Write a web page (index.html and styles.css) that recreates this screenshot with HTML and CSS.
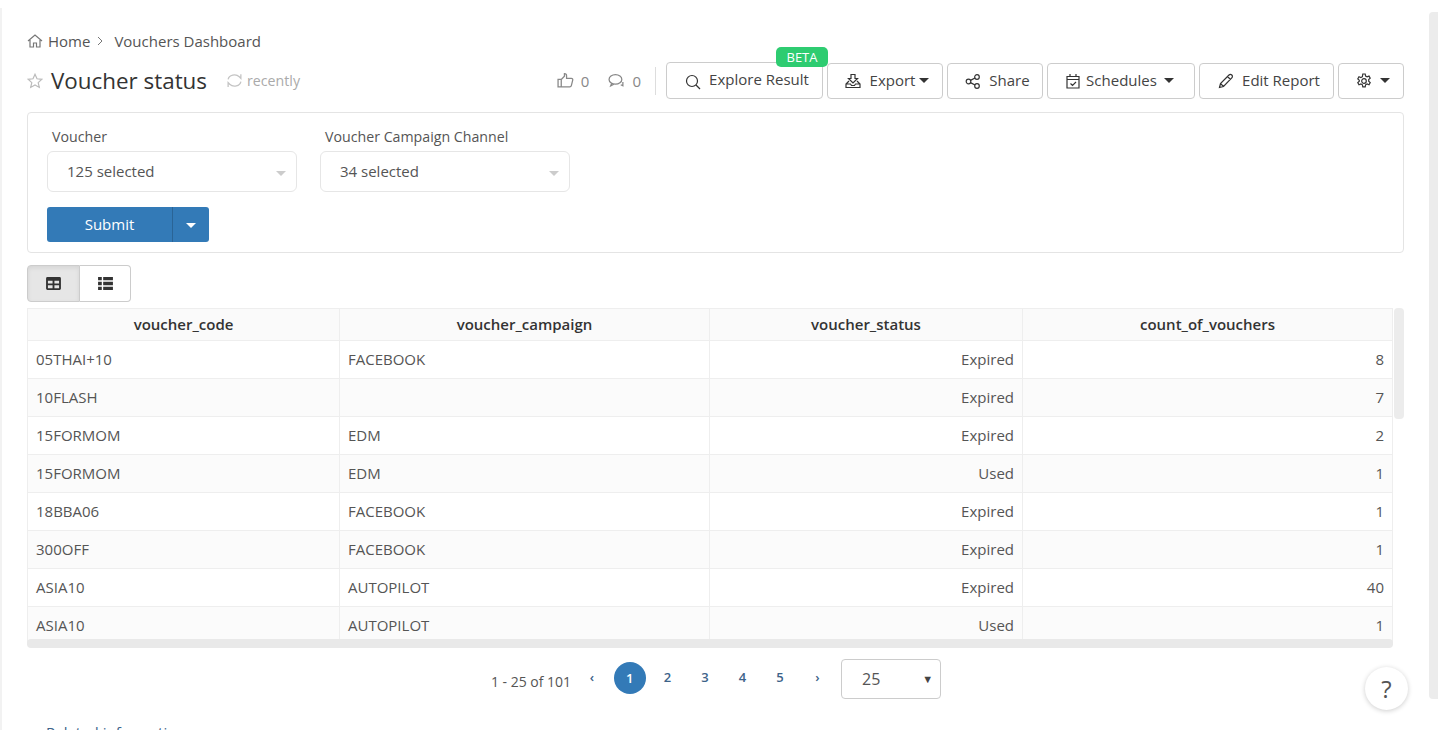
FILE: index.html
```html
<!DOCTYPE html>
<html lang="en">
  <head>
    <meta charset="UTF-8" />
    <title>Voucher status</title>
    <link rel="stylesheet" href="styles.css">
  </head>
  <body>
    <div class="page-rail"></div>
    <div class="page-scroll"></div>
    <div class="container">
      <div class="breadcrumb">
        <svg class="icon home-icon" viewBox="0 0 16 16"><path d="M1 8 8 2l7 6M3 7v7h3.500v-4h3v4H13V7"/></svg>
        <span>Home</span>
        <svg class="crumb-sep" viewBox="0 0 6 10"><path d="M1 1l4 4-4 4"/></svg>
        <span>Vouchers Dashboard</span>
      </div>

      <div class="header">
        <div class="title-group">
          <svg class="icon star-icon" viewBox="0 0 16 16"><path d="M8 1.300l2 4.500 4.900.5-3.700 3.300 1.100 4.800L8 12l-4.300 2.400 1.100-4.800L1.100 6.300 6 5.800z"/></svg>
          <h1>Voucher status</h1>
          <svg class="icon sync-icon" viewBox="0 0 16 16"><path d="M2 7a6 5 0 0 1 10.500-2.500L14 6V2M14 9a6 5 0 0 1-10.500 2.500L2 10v4"/></svg>
          <span class="recently">recently</span>
        </div>
        <div class="actions">
          <span class="stat">
            <svg class="icon stat-icon" viewBox="0 0 16 16"><path d="M1 7h3v7H1zM4 7l3-3V1.500c1.500 0 2 1 2 2V6h4.500c1 0 1.500.8 1.300 1.600l-1.300 5.200c-.2.800-.7 1.200-1.500 1.200H4"/></svg>
            0
          </span>
          <span class="stat stat-last">
            <svg class="icon stat-icon" viewBox="0 0 16 16"><ellipse cx="7" cy="7" rx="6" ry="4.500"/><path d="M3.500 10.500 2.500 13l3-1.500M14 9.500v3.500l-2-1"/></svg>
            0
          </span>
          <button class="btn btn-explore">
            <svg class="icon" viewBox="0 0 16 16"><circle cx="7" cy="7" r="5.500"/><path d="M11 11l4 4"/></svg>
            <span class="explore-label">Explore Result</span>
            <span class="beta">BETA</span>
          </button>
          <button class="btn btn-export">
            <svg class="icon" viewBox="0 0 16 16"><path d="M6 1.500h4v4h2.500L8 10 3.500 5.500H6zM4 8 1 11v3.500h14V11l-3-3M1 11h4.500l1 1.500h3l1-1.500H15"/></svg>
            Export <i class="caret caret-tight"></i>
          </button>
          <button class="btn btn-share">
            <svg class="icon" viewBox="0 0 16 16"><circle cx="3.500" cy="8.500" r="2.300"/><circle cx="12" cy="4" r="2.300"/><circle cx="12" cy="13" r="2.300"/><path d="M5.500 7.400 10 5M5.500 9.600 10 12"/></svg>
            Share
          </button>
          <button class="btn btn-schedules">
            <svg class="icon" viewBox="0 0 16 16"><path d="M2 3.500h12V15H2zM2 6.500h12M5 1v3M11 1v3M5.500 10.500l2 2 3.500-3.500"/></svg>
            Schedules <i class="caret caret-near"></i>
          </button>
          <button class="btn btn-edit">
            <svg class="icon" viewBox="0 0 16 16"><path d="M1.500 14.500l1-4L11 2c.8-.8 2-.8 2.800 0 .8.800.8 2 0 2.800L5.500 13.500zM9.500 3.500l3 3M2.500 10.500l3 3"/></svg>
            Edit Report
          </button>
          <button class="btn btn-settings">
            <svg class="icon" viewBox="0 0 16 16"><circle cx="8" cy="8" r="2.300"/><path d="M6.800 1h2.400l.4 2 1.500.8 1.900-.7 1.200 2.100-1.500 1.300v1.800l1.500 1.300-1.200 2.100-1.900-.7-1.500.8-.4 2H6.800l-.4-2-1.500-.8-1.900.7-1.200-2.100 1.500-1.300V7.200L1.800 5.900 3 3.800l1.900.7 1.500-.8z"/></svg>
            <i class="caret caret-gap"></i>
          </button>
        </div>
      </div>

      <div class="filters">
        <div class="filter-row">
          <div class="filter">
            <label>Voucher</label>
            <div class="select">125 selected<i class="select-arrow"></i></div>
          </div>
          <div class="filter">
            <label>Voucher Campaign Channel</label>
            <div class="select">34 selected<i class="select-arrow"></i></div>
          </div>
        </div>
        <div class="submit-group">
          <button class="submit">Submit</button>
          <button class="submit-more"><i class="caret caret-white"></i></button>
        </div>
      </div>

      <div class="view-toggle">
        <button class="toggle active">
          <svg viewBox="0 0 16 14"><path fill-rule="evenodd" d="M1.500 0h13A1.500 1.500 0 0 1 16 1.500v11a1.500 1.500 0 0 1-1.500 1.500h-13A1.500 1.500 0 0 1 0 12.500v-11A1.500 1.500 0 0 1 1.500 0zM2 4v3h5V4zm7 0v3h5V4zM2 9v3h5V9zm7 0v3h5V9z"/></svg>
        </button>
        <button class="toggle">
          <svg viewBox="0 0 16 14"><path d="M0 0h4v3.600H0zM5.500 0H16v3.600H5.500zM0 5.200h4v3.600H0zM5.500 5.200H16v3.600H5.500zM0 10.400h4V14H0zM5.500 10.400H16V14H5.500z"/></svg>
        </button>
      </div>

      <div class="table-wrap">
        <table class="data-table">
          <thead>
            <tr>
              <th class="col-code">voucher_code</th>
              <th class="col-campaign">voucher_campaign</th>
              <th class="col-status">voucher_status</th>
              <th>count_of_vouchers</th>
            </tr>
          </thead>
          <tbody>
            <tr><td>05THAI+10</td><td>FACEBOOK</td><td class="num">Expired</td><td class="num">8</td></tr>
            <tr><td>10FLASH</td><td></td><td class="num">Expired</td><td class="num">7</td></tr>
            <tr><td>15FORMOM</td><td>EDM</td><td class="num">Expired</td><td class="num">2</td></tr>
            <tr><td>15FORMOM</td><td>EDM</td><td class="num">Used</td><td class="num">1</td></tr>
            <tr><td>18BBA06</td><td>FACEBOOK</td><td class="num">Expired</td><td class="num">1</td></tr>
            <tr><td>300OFF</td><td>FACEBOOK</td><td class="num">Expired</td><td class="num">1</td></tr>
            <tr><td>ASIA10</td><td>AUTOPILOT</td><td class="num">Expired</td><td class="num">40</td></tr>
            <tr><td>ASIA10</td><td>AUTOPILOT</td><td class="num">Used</td><td class="num">1</td></tr>
          </tbody>
        </table>
        <div class="scroll-x"></div>
        <div class="scroll-y"></div>
      </div>

      <div class="pagination">
        <span class="page-info">1 - 25 of 101</span>
        <a class="page-link">‹</a>
        <a class="page-link current">1</a>
        <a class="page-link">2</a>
        <a class="page-link">3</a>
        <a class="page-link">4</a>
        <a class="page-link">5</a>
        <a class="page-link">›</a>
        <div class="page-size">25<span class="page-size-arrow">▼</span></div>
      </div>

      <div class="related">Related information</div>
    </div>
    <div class="help">?</div>
  </body>
</html>
```

FILE: styles.css
```css
html,
body {
  height: 730px;
  margin: 0;
  overflow: hidden;
}
body {
  font-family: "Open Sans", sans-serif;
  font-size: 15px;
  color: #444;
  background: white;
}
button {
  font-family: inherit;
}
.page-rail {
  position: absolute;
  left: 0;
  top: 8px;
  width: 2px;
  height: 722px;
  background: #f2f2f2;
}
.page-scroll {
  position: absolute;
  left: 1429px;
  top: 12px;
  width: 9px;
  height: 687px;
  background: #ececec;
  border-radius: 4px 0 0 4px;
}
.container {
  width: 1377px;
  padding: 31px 0 0 27px;
}
.icon {
  width: 16px;
  height: 16px;
  fill: none;
  stroke: currentColor;
  stroke-width: 1.2;
  flex: none;
}

.breadcrumb {
  display: flex;
  align-items: center;
  height: 19px;
  color: #555;
}
.home-icon {
  margin-right: 5px;
  color: #777;
}
.crumb-sep {
  width: 6px;
  height: 10px;
  margin: 0 11px 0 7px;
  fill: none;
  stroke: #777;
}

.header {
  display: flex;
  justify-content: space-between;
  align-items: center;
  height: 37px;
  margin-top: 12px;
}
.title-group {
  display: flex;
  align-items: center;
}
.star-icon {
  color: #bbb;
  margin-right: 8px;
}
h1 {
  margin: 0 0 1px;
  font-size: 22.400px;
  font-weight: 400;
  color: #333;
}
.sync-icon {
  width: 17px;
  height: 17px;
  color: #c4c4c4;
  margin-left: 19px;
  margin-right: 4px;
}
.recently {
  font-size: 14.200px;
  color: #aaa;
}
.actions {
  display: flex;
  align-items: center;
}
.stat {
  display: flex;
  align-items: center;
  gap: 7px;
  color: #888;
  margin-right: 19px;
}
.stat-icon {
  width: 17px;
  height: 17px;
}
.stat-last {
  margin-right: 10px;
  padding-right: 14px;
  height: 28px;
  border-right: 1px solid #ddd;
}
.btn {
  position: relative;
  display: flex;
  align-items: center;
  justify-content: center;
  box-sizing: border-box;
  height: 36px;
  margin-left: 4px;
  padding: 0 0 2px;
  background: white;
  border: 1px solid #ccc;
  border-radius: 4px;
  font-size: 15px;
  color: #444;
}
.btn .icon,
.btn .caret {
  margin-top: 2px;
}
.btn .icon {
  color: #333;
}
.btn-explore {
  width: 157px;
  height: 37px;
  margin-left: 0;
  padding: 0 0 0 5px;
  gap: 8px;
}
.btn-explore .icon {
  margin-top: 3px;
}
.explore-label {
  margin-bottom: 3px;
}
.btn-export {
  width: 116px;
  padding-left: 4px;
  gap: 9px;
}
.btn-share {
  width: 96px;
  padding-left: 5px;
  gap: 8px;
}
.btn-schedules {
  width: 148px;
  padding-right: 3px;
  gap: 5px;
}
.btn-edit {
  width: 135px;
  padding-left: 5px;
  gap: 8px;
}
.btn-settings {
  width: 66px;
  padding-left: 3px;
  gap: 3px;
}
.beta {
  position: absolute;
  left: 109px;
  top: -16px;
  width: 52px;
  height: 20px;
  line-height: 20px;
  background: #2ecc71;
  border-radius: 5px;
  color: white;
  font-size: 13px;
  text-align: center;
}
.caret {
  display: inline-block;
  width: 0;
  height: 0;
  border-left: 5px solid transparent;
  border-right: 5px solid transparent;
  border-top: 5px solid #333;
}
.caret-gap {
  margin-left: 5px;
}
.caret-near {
  margin-left: 2px;
}
.caret-tight {
  margin-left: -5px;
}
.caret-white {
  border-top-color: white;
}

.filters {
  box-sizing: border-box;
  height: 141px;
  margin-top: 13px;
  padding: 14px 19px 0;
  border: 1px solid #e4e4e4;
  border-radius: 4px;
}
.filter-row {
  display: flex;
  gap: 23px;
}
.filter label {
  display: block;
  height: 19px;
  margin: 0 0 5px 5px;
  font-size: 14.200px;
  color: #555;
}
.select {
  position: relative;
  box-sizing: border-box;
  width: 250px;
  height: 41px;
  line-height: 39px;
  padding-left: 19px;
  border: 1px solid #e6e6e6;
  border-radius: 6px;
  color: #555;
}
.select-arrow {
  position: absolute;
  right: 10px;
  top: 19px;
  border-left: 5px solid transparent;
  border-right: 5px solid transparent;
  border-top: 5px solid #ccc;
}
.submit-group {
  display: flex;
  margin-top: 15px;
}
.submit,
.submit-more {
  display: flex;
  align-items: center;
  justify-content: center;
  height: 35px;
  padding: 0;
  background: #337ab7;
  border: 0;
  color: white;
  font-size: 15px;
}
.submit {
  width: 125px;
  padding-bottom: 2px;
  border-radius: 3px 0 0 3px;
}
.submit-more {
  width: 37px;
  padding-top: 1px;
  border-left: 1px solid #2a6496;
  border-radius: 0 3px 3px 0;
}

.view-toggle {
  display: flex;
  margin-top: 12px;
}
.toggle {
  display: flex;
  align-items: center;
  justify-content: center;
  box-sizing: border-box;
  width: 51px;
  height: 37px;
  padding: 0;
  background: white;
  border: 1px solid #ccc;
  border-left: 0;
  border-radius: 0 4px 4px 0;
}
.toggle.active {
  width: 53px;
  background: #e6e6e6;
  border-left: 1px solid #ccc;
  border-radius: 4px 0 0 4px;
  box-shadow: inset 0 2px 4px rgba(0, 0, 0, 0.08);
}
.toggle svg {
  width: 15px;
  height: 13px;
  fill: #333;
}

.table-wrap {
  position: relative;
  width: 1377px;
  height: 340px;
  margin-top: 6px;
  overflow: hidden;
}
.data-table {
  box-sizing: border-box;
  width: 1366px;
  border-collapse: collapse;
  table-layout: fixed;
  color: #555;
}
.data-table th,
.data-table td {
  box-sizing: border-box;
  padding: 0 8px 2px;
  border: 1px solid #eee;
}
.data-table th {
  height: 32px;
  background: #fafafa;
  color: #333;
  font-weight: 600;
  text-align: center;
}
.data-table td {
  height: 38px;
}
.data-table tbody tr:nth-child(even) {
  background: #fbfbfb;
}
.data-table .num {
  text-align: right;
}
.col-code {
  width: 312px;
}
.col-campaign {
  width: 370px;
}
.col-status {
  width: 313px;
}
.scroll-x {
  position: absolute;
  left: 0;
  bottom: 0;
  width: 1366px;
  height: 9px;
  background: #e9e9e9;
  border-radius: 4px;
}
.scroll-y {
  position: absolute;
  left: 1367px;
  top: 0;
  width: 10px;
  height: 111px;
  background: #ececec;
  border-radius: 4px;
}

.pagination {
  display: flex;
  align-items: center;
  justify-content: center;
  width: 1354px;
  height: 40px;
  margin-top: 11px;
  padding-left: 12px;
}
.page-info {
  margin-right: 2px;
  padding-top: 4px;
  font-size: 14px;
  color: #555;
}
.page-link {
  width: 37.500px;
  text-align: center;
  font-size: 13px;
  font-weight: 600;
  color: #3d6389;
  padding-bottom: 4px;
}
.page-link.current {
  box-sizing: border-box;
  flex: none;
  width: 32px;
  height: 32px;
  line-height: 32px;
  margin: 0 3px 2px;
  padding: 0;
  background: #337ab7;
  border-radius: 50%;
  color: white;
}
.page-size {
  position: relative;
  box-sizing: border-box;
  width: 100px;
  height: 40px;
  line-height: 38px;
  margin-left: 5px;
  padding-left: 20px;
  border: 1px solid #ccc;
  border-radius: 4px;
  font-size: 16px;
  color: #555;
}
.page-size-arrow {
  position: absolute;
  right: 7px;
  top: 0;
  font-size: 11px;
  color: #444;
}

.related {
  margin: 23px 0 0 19px;
  color: #3d6389;
}
.help {
  position: absolute;
  left: 1365px;
  top: 667px;
  width: 43px;
  height: 43px;
  line-height: 43px;
  border-radius: 50%;
  background: white;
  box-shadow: 0 1px 5px rgba(0, 0, 0, 0.2);
  font-size: 24px;
  text-align: center;
  color: #555;
}
```
